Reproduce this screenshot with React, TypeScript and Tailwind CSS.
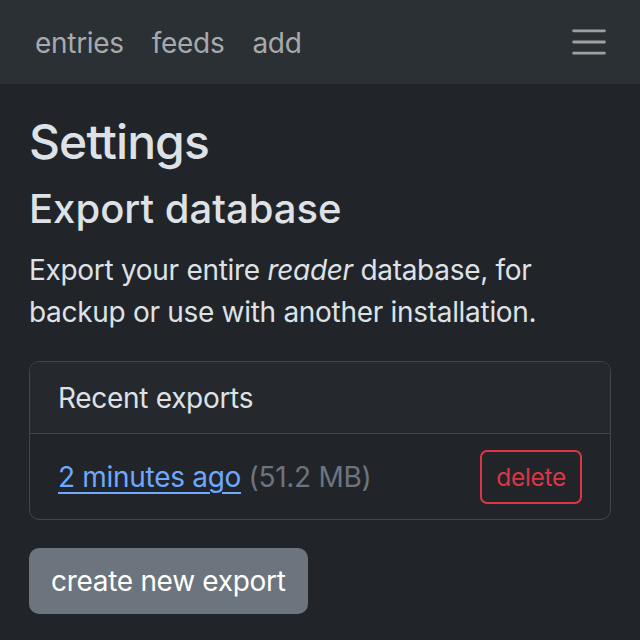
export default function App() {
  return (
    <div className="min-h-[640px] bg-[#212529] text-[#dee2e6] tracking-[-0.3px]" style={{ fontFamily: 'Inter, "Noto Sans", sans-serif' }}>
      <nav className="h-[84px] bg-[#2b3035] flex items-center justify-between pl-[35px] pr-[30px]">
        <div className="flex items-center gap-[28px] text-[28px] leading-[42px] text-[#a7aaad] pt-[1px]">
          <a>entries</a>
          <a>feeds</a>
          <a>add</a>
        </div>
        <svg width="42" height="42" viewBox="0 0 30 30">
          <path d="M4 7h22M4 15h22M4 23h22" stroke="#9ea1a4" strokeWidth="2" strokeLinecap="round" fill="none" />
        </svg>
      </nav>
      <main className="px-[29px] pt-[29px]">
        <h1 className="text-[48px] leading-[57.6px] font-medium mb-[14px] tracking-[-0.9px]">Settings</h1>
        <h2 className="text-[40px] leading-[48px] font-medium mb-[16px] tracking-[0px]">Export database</h2>
        <p className="text-[28px] leading-[42px] mb-[28px]">
          Export your entire <em>reader</em> database, for backup or use with another installation.
        </p>
        <div className="border border-[#42464a] rounded-[10px] overflow-hidden">
          <div className="bg-[#25292d] border-b border-[#42464a] px-[28px] pt-[15px] pb-[14px] text-[28px] leading-[42px]">Recent exports</div>
          <div className="flex items-center justify-between px-[28px] pt-[16px] pb-[15px]">
            <div className="text-[28px] leading-[42px]">
              <a className="text-[#6ea8fe] underline underline-offset-[5px] decoration-[2px]">2 minutes ago</a>{' '}
              <span className="text-[#6c757d]">(51.2 MB)</span>
            </div>
            <button className="h-[54px] px-[14px] border-2 border-[#dc3545] rounded-[7px] text-[#dc3545] text-[24.5px] leading-[36px]">delete</button>
          </div>
        </div>
        <button className="block mt-[28px] h-[66px] px-[22px] bg-[#6c757d] rounded-[10px] text-white text-[28px] leading-[42px]">create new export</button>
      </main>
    </div>
  );
}
